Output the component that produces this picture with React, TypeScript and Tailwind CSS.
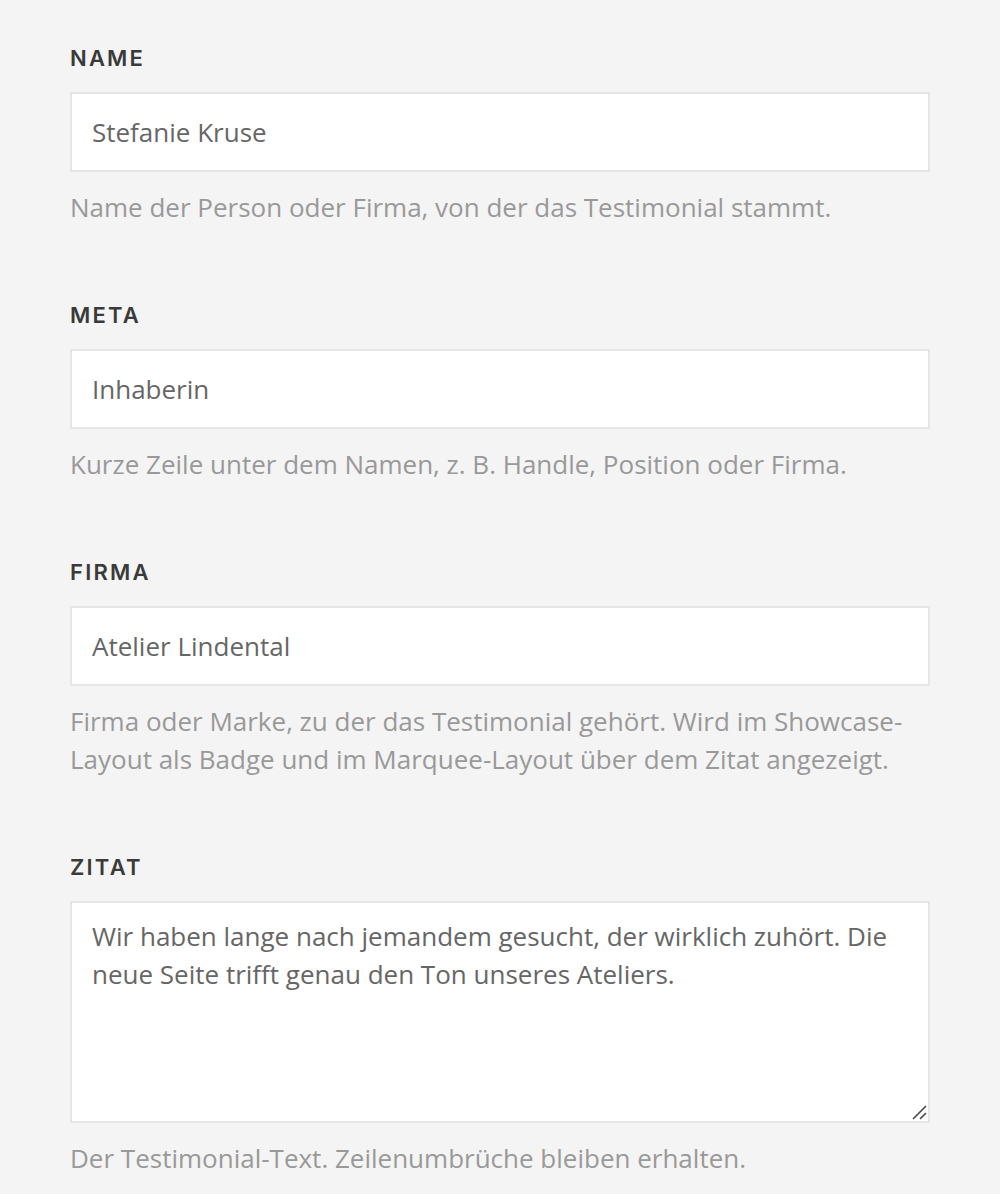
import React from "react";

const fields = [
  {
    label: "NAME",
    value: "Stefanie Kruse",
    help: "Name der Person oder Firma, von der das Testimonial stammt.",
  },
  {
    label: "META",
    value: "Inhaberin",
    help: "Kurze Zeile unter dem Namen, z. B. Handle, Position oder Firma.",
  },
  {
    label: "FIRMA",
    value: "Atelier Lindental",
    help: "Firma oder Marke, zu der das Testimonial gehört. Wird im Showcase-Layout als Badge und im Marquee-Layout über dem Zitat angezeigt.",
  },
];

const labelCls =
  "block mb-5 text-[22px] leading-[28px] font-semibold tracking-[0.1em] text-[#3a3a3a] font-['Inter',sans-serif]";

export default function App() {
  return (
    <div className="min-h-[1194px] bg-[#f4f4f4] px-[70px] pt-[44px] font-['Open_Sans',sans-serif]">
      <div className="w-[860px] flex flex-col gap-[75px]">
        {fields.map((f) => (
          <div key={f.label}>
            <label className={labelCls}>{f.label}</label>
            <input
              type="text"
              defaultValue={f.value}
              className="block w-full h-[80px] bg-white border-2 border-[#e6e6e6] px-5 text-[26px] text-[#666] outline-none"
            />
            <p className="mt-4 text-[26px] leading-[38px] text-[#999]">{f.help}</p>
          </div>
        ))}

        <div>
          <label className={labelCls}>ZITAT</label>
          <div className="relative">
            <textarea
              defaultValue="Wir haben lange nach jemandem gesucht, der wirklich zuhört. Die neue Seite trifft genau den Ton unseres Ateliers."
              className="block w-full h-[222px] resize-none bg-white border-2 border-[#e6e6e6] px-5 py-[14px] text-[26px] leading-[38px] text-[#666] outline-none"
            />
            {/* resize grip */}
            <svg
              className="absolute right-[3px] bottom-[3px] w-[16px] h-[16px] pointer-events-none"
              viewBox="0 0 16 16"
            >
              <path d="M2 15L15 2M9 15L15 9" stroke="#4a4a4a" strokeWidth="1.6" fill="none" />
            </svg>
          </div>
          <p className="mt-4 text-[26px] leading-[38px] text-[#999]">
            Der Testimonial-Text. Zeilenumbrüche bleiben erhalten.
          </p>
        </div>
      </div>
    </div>
  );
}
